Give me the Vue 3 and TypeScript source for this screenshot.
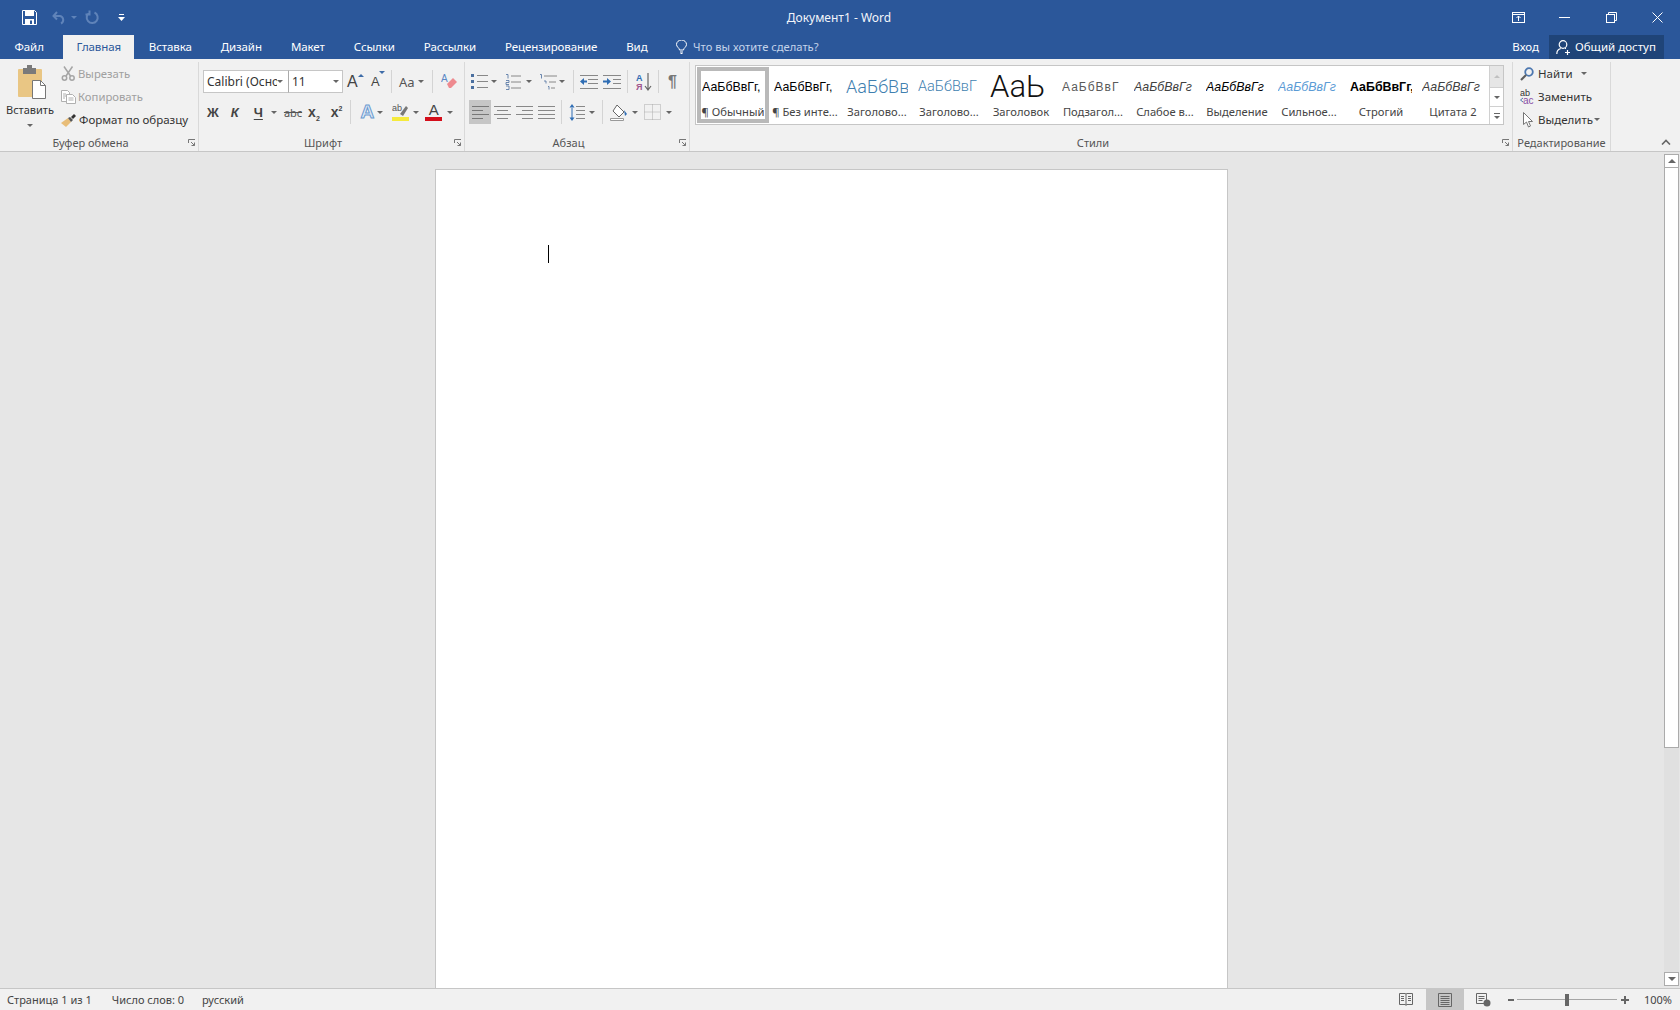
<script setup lang="ts">
const tabs = ['Вставка', 'Дизайн', 'Макет', 'Ссылки', 'Рассылки', 'Рецензирование', 'Вид']

const styles = [
  { sample: 'АаБбВвГг,', label: '¶ Обычный', cls: 'normal', selected: true },
  { sample: 'АаБбВвГг,', label: '¶ Без инте...', cls: 'normal' },
  { sample: 'АаБбВв', label: 'Заголово...', cls: 'h1' },
  { sample: 'АаБбВвГ', label: 'Заголово...', cls: 'h2' },
  { sample: 'АаЬ', label: 'Заголовок', cls: 'title-style' },
  { sample: 'АаБбВвГ', label: 'Подзагол...', cls: 'subtitle' },
  { sample: 'АаБбВвГг', label: 'Слабое в...', cls: 'weak' },
  { sample: 'АаБбВвГг', label: 'Выделение', cls: 'emph' },
  { sample: 'АаБбВвГг', label: 'Сильное...', cls: 'strong-em' },
  { sample: 'АаБбВвГг,', label: 'Строгий', cls: 'strict' },
  { sample: 'АаБбВвГг', label: 'Цитата 2', cls: 'weak' },
]
</script>

<template>
  <div class="word">
    <header class="titlebar">
      <div class="qat">
        <svg class="ml22" width="15" height="15" viewBox="0 0 15 15">
          <path d="M.5.5h12l2 2v12H.5z" fill="none" stroke="#fff" />
          <rect x="3" y="1" width="9" height="5" fill="#fff" />
          <rect x="3" y="9" width="9" height="5" fill="#fff" />
          <rect x="8" y="10.5" width="2" height="3.5" fill="#2b579a" />
        </svg>
        <svg class="ml15" width="14" height="14" viewBox="0 0 14 14" fill="none" stroke="#5f83b9" stroke-width="2">
          <path d="M5 1 1.5 5 5 8.5M2 5h6a4 4 0 0 1 1 7.5" />
        </svg>
        <span class="caret dim ml5"></span>
        <svg class="ml8" width="15" height="15" viewBox="0 0 15 15" fill="none" stroke="#5f83b9" stroke-width="2">
          <path d="M9.5 2.500a5.500 5.500 0 1 1-5 .2M4.500 .5v4h-4" />
        </svg>
        <svg class="ml18" width="7" height="8" viewBox="0 0 7 8" fill="#fff">
          <rect x="1" y="0" width="5" height="1" />
          <path d="M0 3h7L3.500 7z" />
        </svg>
      </div>
      <div class="doc-title">Документ1 - Word</div>
      <div class="winctl">
        <svg width="13" height="11" viewBox="0 0 13 11" fill="none" stroke="#fff">
          <rect x=".5" y=".5" width="12" height="10" />
          <path d="M.5 2.500h12M6.500 9V4M4.500 6l2-2 2 2" />
        </svg>
        <svg class="ctl2" width="11" height="1" viewBox="0 0 11 1"><rect width="11" height="1" fill="#fff" /></svg>
        <svg class="ctl3" width="11" height="11" viewBox="0 0 11 11" fill="none" stroke="#fff">
          <rect x=".5" y="2.500" width="8" height="8" />
          <path d="M2.500 2.500v-2h8v8h-2" />
        </svg>
        <svg class="ctl4" width="11" height="11" viewBox="0 0 11 11" fill="none" stroke="#fff">
          <path d="M.5.500l10 10M10.500.500l-10 10" />
        </svg>
      </div>
    </header>

    <nav class="tabs">
      <span class="tab">Файл</span>
      <span class="tab active">Главная</span>
      <span v-for="t in tabs" :key="t" class="tab">{{ t }}</span>
      <svg class="bulb" width="11" height="14" viewBox="0 0 11 14" fill="none" stroke="#fff">
        <path d="M3.500 10C3.500 8 .5 7 .5 4.500a5 4.500 0 0 1 10 0C10.500 7 7.500 8 7.500 10zM4 12h3M4.500 13.500h2" />
      </svg>
      <span class="tell">Что вы хотите сделать?</span>
      <span class="spacer"></span>
      <span class="login">Вход</span>
      <span class="share">
        <svg width="15" height="15" viewBox="0 0 15 15" fill="none" stroke="#fff" stroke-width="1.200">
          <circle cx="7" cy="4.500" r="3.800" />
          <path d="M.8 14c0-3 2-5 4-5.500M9 8.500h1M11.500 10v5M9 12.500h5" />
        </svg>
        Общий доступ
      </span>
    </nav>

    <section class="ribbon">
      <div class="group g-clip">
        <div class="clip-body">
          <div class="paste">
            <svg width="29" height="34" viewBox="0 0 29 34">
              <rect x="1" y="4" width="24" height="28" rx="1" fill="#e9c684" />
              <rect x="6" y="3" width="13" height="6" fill="#7a7a7a" />
              <rect x="10" y="0" width="5" height="4" fill="#7a7a7a" />
              <path d="M15.500 15.500h8l5 5v13h-13z" fill="#fff" stroke="#777" />
              <path d="M23.500 15.500v5h5" fill="none" stroke="#777" />
            </svg>
            <span class="paste-label">Вставить</span>
            <span class="caret"></span>
          </div>
          <div class="clip-list">
            <div class="row-sm off">
              <svg width="15" height="15" viewBox="0 0 15 15" fill="none" stroke="#a5a5a5" stroke-width="1.500">
                <path d="M3 .5l6.500 9.500M11.500 .5 5 10" />
                <circle cx="3.500" cy="12" r="2.200" />
                <circle cx="11" cy="12" r="2.200" />
              </svg>
              Вырезать
            </div>
            <div class="row-sm off">
              <svg width="15" height="14" viewBox="0 0 15 14" fill="#fff" stroke="#b0b0b0">
                <path d="M.5.500h6l2 2v9h-8z" />
                <path d="M5.500 4.500h6l3 3v6h-9z" />
                <path d="M2 4h3M2 6h3M2 8h2M7.500 8h5M7.500 10h5" />
              </svg>
              Копировать
            </div>
            <div class="row-sm">
              <svg width="16" height="14" viewBox="0 0 16 14">
                <path d="M0 10 7 5l3 4-5 5z" fill="#e8bd78" />
                <path d="M7 5l3 4 2-2-3-3z" fill="#555" />
                <path d="M10 4l3-3 2 2-3 3z" fill="#333" />
              </svg>
              Формат по образцу
            </div>
          </div>
        </div>
        <div class="group-label">Буфер обмена</div>
        <svg class="launcher" width="7" height="7" viewBox="0 0 7 7" fill="none" stroke="#777">
          <path d="M.5 4V.5H7M3 3l3.500 3.500M6.500 3.500v3h-3" />
        </svg>
      </div>

      <div class="group g-font">
        <div class="rows">
          <div class="row">
            <div class="combo font-name"><span class="combo-text">Calibri (Осно</span><span class="caret"></span></div>
            <div class="combo font-size"><span class="combo-text">11</span><span class="caret"></span></div>
            <span class="grow ml4">A<i></i></span>
            <span class="shrink ml7">A<i></i></span>
            <span class="sep ml6"></span>
            <span class="case ml7">Aa</span>
            <span class="caret ml3"></span>
            <span class="sep ml8"></span>
            <svg class="ml8" width="17" height="17" viewBox="0 0 17 17">
              <text x="0" y="9" font-size="10" fill="#5b87c5" font-family="Liberation Sans, sans-serif">A</text>
              <path d="M6 11 12 5l4 4-6 6H8z" fill="#ee8a8f" />
            </svg>
          </div>
          <div class="row second">
            <b class="fmt ml8">Ж</b>
            <b class="fmt slant ml12">К</b>
            <b class="fmt under ml15">Ч</b>
            <span class="caret ml8"></span>
            <span class="strike ml7">abc</span>
            <b class="script ml6">x<sub>2</sub></b>
            <b class="script ml11">x<sup>2</sup></b>
            <span class="sep ml7"></span>
            <span class="effect ml10">A</span>
            <span class="caret ml3"></span>
            <svg class="ml9" width="17" height="18" viewBox="0 0 17 18">
              <text x="0" y="8" font-size="9" fill="#555" font-family="Liberation Sans, sans-serif">ab</text>
              <path d="M8 11l6-8 2 2-5 8z" fill="#777" />
              <rect y="14" width="17" height="4" fill="#f5ea3c" />
            </svg>
            <span class="caret ml4"></span>
            <span class="color-a ml6">A<i></i></span>
            <span class="caret ml5"></span>
          </div>
        </div>
        <div class="group-label">Шрифт</div>
        <svg class="launcher" width="7" height="7" viewBox="0 0 7 7" fill="none" stroke="#777">
          <path d="M.5 4V.5H7M3 3l3.500 3.500M6.500 3.500v3h-3" />
        </svg>
      </div>

      <div class="group g-para">
        <div class="rows">
          <div class="row first-para">
            <svg class="ml6" width="17" height="15" viewBox="0 0 17 15">
              <path d="M0 0h3v3H0zM0 6h3v3H0zM0 12h3v3H0z" fill="#4b6f9f" />
              <path d="M6 1.500h11M6 7.500h11M6 13.500h11" stroke="#888" />
            </svg>
            <span class="caret ml3"></span>
            <svg class="ml8" width="16" height="16" viewBox="0 0 16 16">
              <path d="M1 .5h2v4M1 6.500h3v2H1v2h3M1 12h3v3.500H1" fill="none" stroke="#4b6f9f" stroke-width=".8" />
              <path d="M6 2h10M6 8h10M6 14h10" stroke="#888" />
            </svg>
            <span class="caret ml5"></span>
            <svg class="ml7" width="18" height="16" viewBox="0 0 18 16">
              <path d="M1 .5h1.500v4M5 7h2v2.500M9 12.500h1v3" fill="none" stroke="#4b6f9f" stroke-width=".8" />
              <path d="M5 2h13M10 8h7M12 14h4" stroke="#888" />
            </svg>
            <span class="caret ml2"></span>
            <span class="sep ml8"></span>
            <svg class="ml6" width="18" height="14" viewBox="0 0 18 14">
              <path d="M0 .5h18M8 4.500h10M8 8.500h10M0 13.500h18" stroke="#888" />
              <path d="M0 6.500 4 3v2.500h3v2H4V10z" fill="#2f6db4" />
            </svg>
            <svg class="ml5" width="18" height="14" viewBox="0 0 18 14">
              <path d="M0 .5h18M10 4.500h8M10 8.500h8M0 13.500h18" stroke="#888" />
              <path d="M8 6.500 4 3v2.500H0v2h4V10z" fill="#2f6db4" />
            </svg>
            <span class="sep ml6"></span>
            <svg class="ml8" width="16" height="18" viewBox="0 0 16 18">
              <text x="0" y="8" font-size="9" font-weight="700" fill="#2f6db4" font-family="Liberation Sans, sans-serif">А</text>
              <text x="0" y="17" font-size="9" font-weight="700" fill="#a0568e" font-family="Liberation Sans, sans-serif">Я</text>
              <path d="M12 0v16M9 13l3 4 3-4" fill="none" stroke="#666" stroke-width="1.200" />
            </svg>
            <span class="sep ml6"></span>
            <span class="pilcrow ml9">¶</span>
          </div>
          <div class="row second">
            <span class="align on ml4">
              <svg width="17" height="13" viewBox="0 0 17 13" stroke="#777"><path d="M0 .5h17M0 4.500h11M0 8.500h17M0 12.500h11" /></svg>
            </span>
            <svg class="ml3" width="17" height="13" viewBox="0 0 17 13" stroke="#888"><path d="M0 .5h17M3 4.500h11M0 8.500h17M3 12.500h11" /></svg>
            <svg class="ml5" width="17" height="13" viewBox="0 0 17 13" stroke="#888"><path d="M0 .5h17M6 4.500h11M0 8.500h17M6 12.500h11" /></svg>
            <svg class="ml5" width="17" height="13" viewBox="0 0 17 13" stroke="#888"><path d="M0 .5h17M0 4.500h17M0 8.500h17M0 12.500h17" /></svg>
            <span class="sep ml6"></span>
            <svg class="ml7" width="16" height="17" viewBox="0 0 16 17">
              <path d="M7 2.500h9M7 6.500h9M7 10.500h9M7 14.500h9" stroke="#888" />
              <path d="M3 0 .5 3.500h5zM3 17l-2.500-3.500h5zM2.500 3h1v11h-1z" fill="#2f6db4" />
            </svg>
            <span class="caret ml4"></span>
            <span class="sep ml7"></span>
            <svg class="ml7" width="17" height="17" viewBox="0 0 17 17">
              <path d="M7 1l7 7-5 5-6-6z" fill="#fff" stroke="#666" />
              <path d="M14 6l3 4-2 2z" fill="#2f6db4" />
              <path d="M.5 14.500h13v2H.5z" fill="#fff" stroke="#999" />
            </svg>
            <span class="caret ml5"></span>
            <svg class="ml6" width="17" height="16" viewBox="0 0 17 16" fill="none" stroke="#aaa" stroke-dasharray="1 1">
              <rect x=".5" y=".5" width="16" height="15" />
              <path d="M.5 8h16M8.500 .5v15" />
            </svg>
            <span class="caret ml5"></span>
          </div>
        </div>
        <div class="group-label">Абзац</div>
        <svg class="launcher" width="7" height="7" viewBox="0 0 7 7" fill="none" stroke="#777">
          <path d="M.5 4V.5H7M3 3l3.500 3.500M6.500 3.500v3h-3" />
        </svg>
      </div>

      <div class="group g-styles">
        <div class="gallery">
          <div class="gallery-items">
            <div v-for="(s, i) in styles" :key="i" class="style-item" :class="{ selected: s.selected }">
              <div class="sample" :class="s.cls">{{ s.sample }}</div>
              <div class="style-name">{{ s.label }}</div>
            </div>
          </div>
          <div class="gallery-scroll">
            <span class="gs up"><i class="tri-up"></i></span>
            <span class="gs mid"><span class="caret"></span></span>
            <span class="gs more"><i class="bar"></i><span class="caret"></span></span>
          </div>
        </div>
        <div class="group-label">Стили</div>
        <svg class="launcher" width="7" height="7" viewBox="0 0 7 7" fill="none" stroke="#777">
          <path d="M.5 4V.5H7M3 3l3.500 3.500M6.500 3.500v3h-3" />
        </svg>
      </div>

      <div class="group g-edit">
        <div class="edit-list">
          <div class="row-sm">
            <svg width="14" height="14" viewBox="0 0 14 14" fill="none">
              <circle cx="9" cy="5" r="3.800" stroke="#4d78b0" stroke-width="1.800" />
              <path d="M6 8 1 13" stroke="#5d5d5d" stroke-width="2.200" />
            </svg>
            Найти
            <span class="caret ml4"></span>
          </div>
          <div class="row-sm">
            <svg width="14" height="16" viewBox="0 0 14 16">
              <text x="0" y="7" font-size="9" fill="#333" font-family="Liberation Sans, sans-serif">ab</text>
              <text x="3" y="15" font-size="10" fill="#8a4fa5" font-family="Liberation Sans, sans-serif">ac</text>
              <path d="M3 9 0.500 11 3 13" fill="none" stroke="#4d78b0" />
            </svg>
            Заменить
          </div>
          <div class="row-sm">
            <svg width="14" height="16" viewBox="0 0 14 16" fill="#fff" stroke="#777">
              <path d="M3.500 .5v12l3-2.500 2 5 2-1-2-4.500h4z" />
            </svg>
            Выделить
            <span class="caret tuck"></span>
          </div>
        </div>
        <div class="group-label">Редактирование</div>
      </div>

      <svg class="collapse" width="10" height="6" viewBox="0 0 10 6" fill="none" stroke="#666" stroke-width="1.600">
        <path d="M1 5.500 5 1.500l4 4" />
      </svg>
    </section>

    <main class="doc">
      <div class="canvas">
        <div class="page"><span class="text-cursor"></span></div>
      </div>
      <div class="scrollbar">
        <span class="sb-btn"><i class="tri-up"></i></span>
        <span class="sb-thumb"></span>
        <span class="sb-fill"></span>
        <span class="sb-btn"><span class="caret big"></span></span>
      </div>
    </main>

    <footer class="status">
      <span class="st-page">Страница 1 из 1</span>
      <span class="st-words">Число слов: 0</span>
      <span class="st-lang">русский</span>
      <span class="spacer"></span>
      <svg width="14" height="13" viewBox="0 0 14 13" fill="none" stroke="#666">
        <path d="M.5.500h6l.5 1 .5-1h6v11h-6l-.5 1-.5-1h-6zM7 1.500v10M2 3.500h3M2 5.500h3M2 7.500h3M9 3.500h3M9 5.500h3M9 7.500h3" />
      </svg>
      <span class="view-on">
        <svg width="14" height="14" viewBox="0 0 14 14" fill="none" stroke="#666">
          <path d="M.5.500h13v13H.5zM2.500 3.500h9M2.500 5.500h9M2.500 7.500h9M2.500 9.500h9M2.500 11.500h9" />
        </svg>
      </span>
      <svg class="view-web" width="15" height="14" viewBox="0 0 15 14">
        <path d="M.5.500h10v10H.5zM2.500 3.500h6M2.500 5.500h6M2.500 7.500h4" fill="none" stroke="#666" />
        <circle cx="11" cy="10" r="3.500" fill="#666" />
      </svg>
      <span class="zoom-minus"></span>
      <span class="slider"><i></i></span>
      <span class="zoom-plus"></span>
      <span class="zoom-pct">100%</span>
    </footer>
  </div>
</template>

<style scoped>
.word {
  display: flex;
  flex-direction: column;
  height: 100vh;
  overflow: hidden;
  font-family: 'Noto Sans', 'Open Sans', sans-serif;
  font-size: 11.500px;
  color: #444;
  background: #e6e6e6;
}

/* title bar */
.titlebar {
  display: grid;
  grid-template-columns: 1fr auto 1fr;
  align-items: center;
  height: 35px;
  background: #2b579a;
  color: #fff;
}
.qat,
.winctl {
  display: flex;
  align-items: center;
}
.winctl {
  justify-content: flex-end;
  padding-right: 17px;
}
.ctl2 {
  margin-left: 34px;
}
.ctl3 {
  margin-left: 36px;
}
.ctl4 {
  margin-left: 35px;
}
.doc-title {
  font-size: 12px;
  color: #f2f5fa;
  transform: translateX(-1px);
}

/* tabs */
.tabs {
  display: flex;
  align-items: stretch;
  height: 24px;
  background: #2b579a;
  color: #fff;
  line-height: 24px;
}
.tab {
  padding: 0 14.500px;
  letter-spacing: -0.100px;
}
.tab.active {
  width: 71px;
  margin-left: 5px;
  padding: 0;
  text-align: center;
  background: #f1f1f1;
  color: #2b579a;
}
.bulb {
  margin: 5px 0 0 14px;
}
.tell {
  margin-left: 6px;
  font-size: 11.200px;
  color: #c5d4ea;
}
.login {
  margin-right: 10px;
}
.share {
  display: flex;
  align-items: center;
  gap: 4px;
  width: 115px;
  margin-right: 16px;
  padding-left: 7px;
  background: #1f4478;
  box-sizing: border-box;
}
.spacer {
  flex: 1;
}

/* ribbon */
.ribbon {
  position: relative;
  display: flex;
  height: 92px;
  flex-shrink: 0;
  background: #f1f1f1;
  border-bottom: 1px solid #c6c6c6;
}
.group {
  position: relative;
  display: flex;
  flex-direction: column;
  height: 89px;
  margin-top: 3px;
  border-right: 1px solid #d9d9d9;
  box-sizing: content-box;
}
.g-clip {
  width: 198px;
}
.g-font {
  width: 265px;
}
.g-para {
  width: 224px;
}
.g-edit {
  width: 97px;
}
.group-label {
  height: 17px;
  padding-right: 17px;
  line-height: 17px;
  text-align: center;
  color: #555;
  font-size: 11px;
}
.g-edit .group-label {
  padding-right: 0;
}
.g-styles .group-label {
  padding-right: 21px;
}
.launcher {
  position: absolute;
  right: 3px;
  bottom: 5px;
}
.caret {
  display: inline-block;
  flex-shrink: 0;
  width: 0;
  height: 0;
  border-left: 3px solid transparent;
  border-right: 3px solid transparent;
  border-top: 3px solid #666;
}
.caret.dim {
  border-top-color: #5f83b9;
}
.caret.big {
  border-left-width: 4px;
  border-right-width: 4px;
  border-top-width: 4px;
}
.caret.tuck {
  margin-left: -3px;
}

/* clipboard */
.clip-body {
  display: flex;
  flex: 1;
}
.paste {
  display: flex;
  flex-direction: column;
  align-items: center;
  width: 60px;
  padding-top: 3px;
  box-sizing: border-box;
}
.paste svg {
  margin-left: 3px;
}
.paste-label {
  margin-top: 3px;
  color: #333;
  font-size: 11px;
}
.paste .caret {
  margin-top: 7px;
}
.clip-list,
.edit-list {
  display: flex;
  flex-direction: column;
}
.row-sm {
  display: flex;
  align-items: center;
  gap: 4px;
  height: 23px;
  white-space: nowrap;
  color: #333;
}
.clip-list .row-sm {
  gap: 2px;
  margin-left: 1px;
}
.row-sm.off {
  color: #a0a0a0;
  font-size: 11.300px;
}
.edit-list {
  flex: 1;
  padding-left: 7px;
}

/* font and paragraph rows */
.rows {
  display: flex;
  flex-direction: column;
  flex: 1;
  padding-top: 8px;
}
.row {
  display: flex;
  align-items: center;
  height: 23px;
}
.second {
  height: 24px;
  margin-top: 7px;
}
.g-font .row:first-child {
  padding-left: 4px;
}
.combo {
  display: flex;
  align-items: center;
  height: 23px;
  padding: 0 3px;
  background: #fff;
  border: 1px solid #c6c6c6;
  box-sizing: border-box;
  color: #333;
  font-size: 12px;
}
.font-name {
  width: 85px;
  padding-right: 5px;
  border-right: 0;
}
.font-size {
  width: 55px;
  border-left: 1px solid #aaa;
}
.combo-text {
  flex: 1;
  overflow: hidden;
  white-space: nowrap;
}
.ml2 { margin-left: 2px; }
.ml3 { margin-left: 3px; }
.ml4 { margin-left: 4px; }
.ml5 { margin-left: 5px; }
.ml6 { margin-left: 6px; }
.ml7 { margin-left: 7px; }
.ml8 { margin-left: 8px; }
.ml9 { margin-left: 9px; }
.ml10 { margin-left: 10px; }
.ml11 { margin-left: 11px; }
.ml12 { margin-left: 12px; }
.ml15 { margin-left: 15px; }
.ml18 { margin-left: 18px; }
.ml22 { margin-left: 22px; }
.sep {
  align-self: stretch;
  width: 1px;
  background: #d4d4d4;
}
.grow,
.shrink {
  position: relative;
  font-family: 'Liberation Sans', sans-serif;
  font-size: 16px;
  width: 17px;
  color: #444;
}
.shrink {
  font-size: 13px;
  width: 14px;
}
.grow i,
.shrink i {
  position: absolute;
  top: 1px;
  right: 0;
  border-left: 3px solid transparent;
  border-right: 3px solid transparent;
  border-bottom: 3px solid #3e6ca8;
}
.shrink i {
  top: -3px;
  border-bottom: 0;
  border-top: 3px solid #3e6ca8;
}
.case {
  font-size: 13px;
  color: #555;
}
.fmt {
  font-family: 'Liberation Sans', sans-serif;
  font-size: 13px;
  color: #444;
}
.slant {
  font-style: italic;
}
.under {
  text-decoration: underline;
  text-underline-offset: 2px;
}
.strike {
  font-size: 11px;
  color: #555;
  text-decoration: line-through;
}
.script {
  font-family: 'Liberation Sans', sans-serif;
  font-size: 14px;
  color: #444;
}
.script sub,
.script sup {
  font-size: 7px;
  line-height: 0;
}
.effect {
  font-family: 'Liberation Sans', sans-serif;
  font-size: 19px;
  font-weight: 700;
  color: #dfe9f5;
  -webkit-text-stroke: 1px #6a9ad0;
}
.color-a {
  display: flex;
  flex-direction: column;
  align-items: center;
  width: 17px;
  font-family: 'Liberation Sans', sans-serif;
  font-size: 15px;
  line-height: 14px;
  color: #444;
}
.color-a i {
  width: 17px;
  height: 4px;
  background: #d40e1b;
}
.pilcrow {
  font-family: 'Liberation Sans', sans-serif;
  font-size: 16px;
  font-weight: 700;
  color: #777;
}
.align.on {
  display: flex;
  align-items: center;
  justify-content: center;
  width: 22px;
  height: 24px;
  background: #c6c6c6;
}

/* styles gallery */
.g-styles {
  width: 817px;
  padding-left: 5px;
}
.gallery {
  display: flex;
  flex: none;
  width: 809px;
  height: 60px;
  margin: 3px 0 9px;
  background: #fff;
  border: 1px solid #c6c6c6;
  box-sizing: border-box;
}
.gallery-items {
  display: flex;
  flex: 1;
  padding: 1px 0 0 1px;
}
.style-item {
  width: 72px;
  height: 56px;
  padding-top: 4px;
  box-sizing: border-box;
}
.style-item.selected {
  box-shadow: inset 0 0 0 4px #b9b9b9;
}
.sample {
  height: 32px;
  line-height: 32px;
  margin: 0 5px;
  overflow: hidden;
  white-space: nowrap;
  font-family: 'Liberation Sans', sans-serif;
  font-size: 12.400px;
  color: #000;
}
.h1 {
  font-family: Roboto, 'Liberation Sans', sans-serif;
  font-size: 18px;
  font-weight: 300;
  color: #3f7fb0;
}
.h2 {
  font-family: Roboto, 'Liberation Sans', sans-serif;
  font-size: 14.500px;
  font-weight: 300;
  color: #3f7fb0;
}
.title-style {
  height: 36px;
  margin-top: -2px;
  margin-bottom: -2px;
  font-family: Roboto, 'Liberation Sans', sans-serif;
  font-size: 31px;
  font-weight: 300;
  line-height: 36px;
  color: #111;
}
.subtitle {
  color: #5a5a5a;
  font-size: 12px;
  letter-spacing: 1px;
}
.weak {
  font-style: italic;
  color: #404040;
}
.emph {
  font-style: italic;
}
.strong-em {
  font-style: italic;
  color: #5b9bd5;
}
.strict {
  font-weight: 700;
}
.style-name {
  height: 18px;
  line-height: 18px;
  text-align: center;
  white-space: nowrap;
  overflow: hidden;
  color: #444;
  font-size: 11.200px;
}
.gallery-scroll {
  display: flex;
  flex-direction: column;
  width: 15px;
  border-left: 1px solid #d0d0d0;
  box-sizing: border-box;
}
.gs {
  display: flex;
  flex-direction: column;
  align-items: center;
  justify-content: center;
  gap: 2px;
  height: 18px;
  border-bottom: 1px solid #d0d0d0;
}
.gs.up {
  height: 21px;
  background: #e6e6e6;
}
.gs.up .tri-up {
  border-bottom-color: #c0c0c0;
}
.gs.more {
  flex: 1;
  border-bottom: 0;
}
.bar {
  width: 6px;
  height: 1px;
  background: #666;
}
.tri-up {
  width: 0;
  height: 0;
  border-left: 3px solid transparent;
  border-right: 3px solid transparent;
  border-bottom: 3px solid #666;
}

.collapse {
  position: absolute;
  right: 9px;
  bottom: 6px;
}

/* document */
.doc {
  display: flex;
  flex: 1;
  min-height: 0;
}
.canvas {
  display: flex;
  justify-content: center;
  flex: 1;
  padding: 17px 2px 0 0;
  overflow: hidden;
}
.page {
  flex-shrink: 0;
  width: 793px;
  height: 1024px;
  padding: 75px 0 0 112px;
  background: #fff;
  border: 1px solid #c6c6c6;
  box-sizing: border-box;
}
.text-cursor {
  display: block;
  width: 1px;
  height: 18px;
  background: #000;
}
.scrollbar {
  display: flex;
  flex-direction: column;
  width: 15px;
  margin-right: 1px;
  padding: 2px 0;
}
.sb-btn {
  display: flex;
  align-items: center;
  justify-content: center;
  height: 14px;
  background: #fff;
  border: 1px solid #ababab;
  box-sizing: border-box;
}
.sb-btn .tri-up {
  border-left-width: 4px;
  border-right-width: 4px;
  border-bottom-width: 4px;
}
.sb-thumb {
  height: 580px;
  background: #fff;
  border: 1px solid #ababab;
  border-top: 0;
  box-sizing: border-box;
}
.sb-fill {
  flex: 1;
  background: #e0e0e0;
}

/* status bar */
.status {
  display: flex;
  align-items: center;
  flex-shrink: 0;
  height: 22px;
  background: #f1f1f1;
  border-top: 1px solid #c6c6c6;
  box-sizing: border-box;
  color: #444;
  font-size: 11px;
}
.st-page {
  margin-left: 7px;
}
.st-words {
  margin-left: 20px;
}
.st-lang {
  margin-left: 18px;
}
.view-on {
  display: flex;
  align-items: center;
  justify-content: center;
  align-self: stretch;
  width: 38px;
  margin-left: 13px;
  background: #c6c6c6;
}
.view-web {
  margin-left: 12px;
}
.zoom-minus {
  width: 6px;
  height: 2px;
  margin-left: 17px;
  background: #666;
}
.slider {
  display: flex;
  align-items: center;
  justify-content: center;
  width: 100px;
  height: 1px;
  margin-left: 3px;
  background: #a6a6a6;
}
.slider i {
  flex-shrink: 0;
  width: 4px;
  height: 12px;
  background: #666;
}
.zoom-plus {
  position: relative;
  width: 8px;
  height: 2px;
  margin-left: 4px;
  background: #666;
}
.zoom-plus::after {
  content: '';
  position: absolute;
  left: 3px;
  top: -3px;
  width: 2px;
  height: 8px;
  background: #666;
}
.zoom-pct {
  margin: 0 8px 0 15px;
}
</style>
